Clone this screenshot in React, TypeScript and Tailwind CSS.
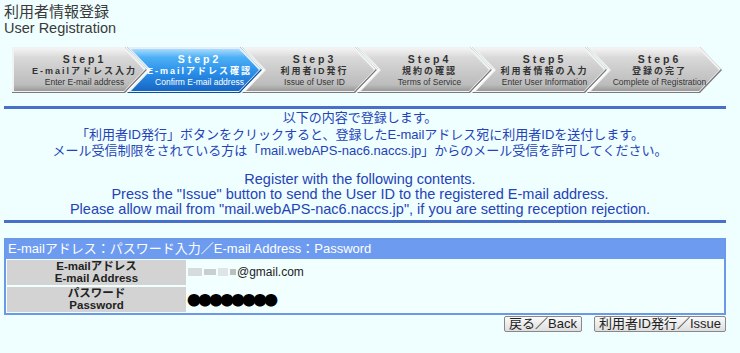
import React from "react";

interface Step {
  no: number;
  ja: string;
  en: string;
}

const steps: Step[] = [
  { no: 1, ja: "E-mailアドレス入力", en: "Enter E-mail address" },
  { no: 2, ja: "E-mailアドレス確認", en: "Confirm E-mail address" },
  { no: 3, ja: "利用者ID発行", en: "Issue of User ID" },
  { no: 4, ja: "規約の確認", en: "Terms of Service" },
  { no: 5, ja: "利用者情報の入力", en: "Enter User Information" },
  { no: 6, ja: "登録の完了", en: "Complete of Registration" },
];

const CURRENT = 2;

const Chevron: React.FC<{ step: Step }> = ({ step }) => {
  const active = step.no === CURRENT;
  const first = step.no === 1;
  const outer = first
    ? "0,0 113,0 135,23 113,46 0,46"
    : "0,0 113,0 135,23 113,46 0,46 22,23";
  const inner = first
    ? "2,2 112,2 132,23 112,44 2,44"
    : "4,2 112,2 132,23 112,44 4,44 24,23";
  const grad = active ? "url(#blueFill)" : "url(#grayFill)";

  return (
    <div className={`grid w-[135px] h-[46px] shrink-0 ${first ? "" : "-ml-[20px]"}`}>
      <svg
        width="135"
        height="46"
        viewBox="0 0 135 46"
        className="[grid-area:1/1]"
      >
        <polygon points={outer} fill={active ? "#0f4f9e" : "#7a7a7a"} />
        <polygon points={outer} fill="#ffffff" transform="translate(-1,-1)" opacity="0.9" />
        <polygon points={inner} fill={grad} />
      </svg>
      <div
        className={`[grid-area:1/1] flex flex-col items-center justify-center pl-[16px] pr-[6px] leading-none font-bold ${
          active ? "text-white" : "text-[#333]"
        }`}
      >
        <div className="text-[10.5px] tracking-[3px]">Step{step.no}</div>
        <div className="text-[9px] tracking-[2px] mt-[2px]">{step.ja}</div>
        <div className="text-[8.5px] font-normal mt-[2px] whitespace-nowrap">{step.en}</div>
      </div>
    </div>
  );
};

const App: React.FC = () => {
  return (
    <div
      className="w-[740px] h-[353px] overflow-hidden bg-[#effefe] text-[#333]"
      style={{ fontFamily: '"Liberation Sans", "Noto Sans CJK JP", sans-serif' }}
    >
      <svg width="0" height="0" className="absolute">
        <defs>
          <linearGradient id="grayFill" x1="0" y1="0" x2="0" y2="1">
            <stop offset="0" stopColor="#f2f2f2" />
            <stop offset="0.2" stopColor="#d9d9d9" />
            <stop offset="0.55" stopColor="#c9c9c9" />
            <stop offset="0.85" stopColor="#bcbcbc" />
            <stop offset="1" stopColor="#9a9a9a" />
          </linearGradient>
          <linearGradient id="blueFill" x1="0" y1="0" x2="0" y2="1">
            <stop offset="0" stopColor="#a8dcff" />
            <stop offset="0.2" stopColor="#4db0f5" />
            <stop offset="0.55" stopColor="#2a90ea" />
            <stop offset="1" stopColor="#1766c4" />
          </linearGradient>
        </defs>
      </svg>

      <div className="pl-[4px] pt-[4px] leading-[16px]">
        <div className="text-[15px] text-[#3a3a3a]">利用者情報登録</div>
        <div className="text-[14.5px] text-[#3a3a3a]">User Registration</div>
      </div>

      <div className="flex pl-[12px] mt-[11px]">
        {steps.map((s) => (
          <Chevron key={s.no} step={s} />
        ))}
      </div>

      <div className="mx-[4px] w-[722px] h-[3px] bg-[#4a6fc8] mt-[13px]" />

      <div className="text-center text-[#2443b8] text-[13px] leading-[16.5px] pt-[1px] w-[720px]">
        <div>以下の内容で登録します。</div>
        <div>「利用者ID発行」ボタンをクリックすると、登録したE-mailアドレス宛に利用者IDを送付します。</div>
        <div>メール受信制限をされている方は「mail.webAPS-nac6.naccs.jp」からのメール受信を許可してください。</div>
        <div className="text-[14.5px] leading-[15px] mt-[12px]">
          <div>Register with the following contents.</div>
          <div>Press the "Issue" button to send the User ID to the registered E-mail address.</div>
          <div>Please allow mail from "mail.webAPS-nac6.naccs.jp", if you are setting reception rejection.</div>
        </div>
      </div>

      <div className="mx-[4px] w-[722px] h-[3px] bg-[#4a6fc8] mt-[3px]" />

      <div className="mx-[4px] w-[722px] mt-[15px] border-2 border-[#6d98ea] bg-[#f2ffff]">
        <div className="bg-[#6d9bf0] text-white text-[13px] leading-[18px] h-[19px] pl-[2px] whitespace-nowrap">
          E-mailアドレス：パスワード入力／E-mail Address：Password
        </div>
        <div className="flex flex-col gap-[2px] p-[1px]">
          <div className="flex h-[25px]">
            <div className="w-[179px] bg-[#d3d3d3] flex flex-col items-center justify-center text-[11.5px] leading-[12px] font-bold text-[#222]">
              <div>E-mailアドレス</div>
              <div>E-mail Address</div>
            </div>
            <div className="flex-1 flex items-center pl-[2px] text-[12px] text-[#222]">
              <span className="flex items-center gap-[2px] mr-[1px]">
                <span className="w-[14px] h-[8px] bg-[#d6dcdc]" />
                <span className="w-[12px] h-[6px] bg-[#c8cfcf]" />
                <span className="w-[10px] h-[8px] bg-[#dfe5e5]" />
                <span className="w-[6px] h-[6px] bg-[#b9c0c0]" />
              </span>
              @gmail.com
            </div>
          </div>
          <div className="flex h-[25px]">
            <div className="w-[179px] bg-[#d3d3d3] flex flex-col items-center justify-center text-[11.5px] leading-[12px] font-bold text-[#222]">
              <div>パスワード</div>
              <div>Password</div>
            </div>
            <div
              className="flex-1 flex items-center pl-[1px] text-[14px] text-black tracking-[-3px]"
              style={{ fontFamily: '"Noto Sans CJK JP", sans-serif' }}
            >
              ●●●●●●●●
            </div>
          </div>
        </div>
      </div>

      <div className="flex justify-end gap-[12px] w-[726px] mt-[1px]">
        <button className="h-[16px] px-[4px] border border-[#888] rounded-[2px] bg-gradient-to-b from-[#fafafa] to-[#dedede] text-[13px] leading-[14px] text-[#222]">
          戻る／Back
        </button>
        <button className="h-[16px] px-[4px] border border-[#888] rounded-[2px] bg-gradient-to-b from-[#fafafa] to-[#dedede] text-[13px] leading-[14px] text-[#222]">
          利用者ID発行／Issue
        </button>
      </div>
    </div>
  );
};

export default App;
